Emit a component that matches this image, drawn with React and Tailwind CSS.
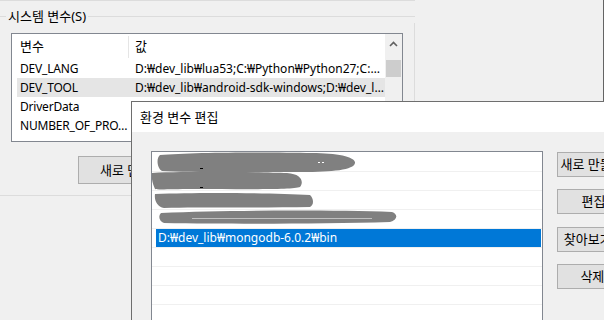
import React from 'react';

const sysVars = [
  { name: 'DEV_LANG', value: 'D:₩dev_lib₩lua53;C:₩Python₩Python27;C:…' },
  { name: 'DEV_TOOL', value: 'D:₩dev_lib₩android-sdk-windows;D:₩dev_l…', hot: true },
  { name: 'DriverData', value: '' },
  { name: 'NUMBER_OF_PRO…', value: '' },
];

const pathRows = ['', '', '', '', 'D:₩dev_lib₩mongodb-6.0.2₩bin', '', '', '', ''];

function WinButton({ children, className = '' }) {
  return (
    <div className={`h-[25px] w-[88px] shrink-0 border border-[#adadad] bg-[#e1e1e1] flex items-center justify-center whitespace-nowrap text-[13px] ${className}`}>
      {children}
    </div>
  );
}

function Redactions() {
  // scribbles hiding the private paths (coords relative to list box)
  return (
    <svg className="absolute left-0 top-0 pointer-events-none" width="400" height="100" viewBox="0 0 400 100">
      <g fill="#808080">
        <path d="M8 3 C40 0 120 0 160 1 C185 1 204 5 203 11 C202 18 180 20 150 20 C110 20 40 21 10 19 C5 16 4 6 8 3 Z" />
        <path d="M0 21 C40 19 110 20 135 21 C150 22 152 30 148 35 C140 38 90 37 40 37 C20 37 6 38 3 37 C1 33 -1 26 0 21 Z" />
        <path d="M3 42 C50 40 120 41 158 43 C162 47 162 53 158 55 C110 56 50 55 12 56 C5 55 2 48 3 42 Z" />
        <path d="M9 61 C80 58 180 58 240 60 C246 62 246 68 238 70 C170 72 80 72 12 71 C7 69 6 64 9 61 Z" />
      </g>
      <g fill="#ffffff">
        <rect x="166" y="10" width="2" height="1" />
        <rect x="170" y="10" width="2" height="1" />
        <rect x="40" y="66" width="180" height="1" opacity="0.5" />
      </g>
      <g fill="#000000">
        <rect x="48" y="16" width="3" height="1" />
        <rect x="48" y="35" width="3" height="1" />
      </g>
    </svg>
  );
}

export default function App() {
  return (
    <div className="relative w-[604px] h-[320px] overflow-hidden bg-[#f0f0f0] text-[12px] leading-none text-black font-['Noto_Sans','Noto_Sans_CJK_KR',sans-serif]">
      {/* background window: 환경 변수 */}
      <div className="w-[604px] h-[320px] border-r border-[#646464]">
        <div className="h-px w-[415px] bg-[#dcdcdc]" />

        {/* group box */}
        <div className="w-[415px] mt-[8px]">
          <div className="flex items-center h-[14px]">
            <div className="w-[6px] h-px bg-[#dcdcdc]" />
            <span className="px-[2px] whitespace-nowrap text-[13px]">시스템 변수(S)</span>
            <div className="flex-1 h-px bg-[#dcdcdc]" />
          </div>
          <div className="h-[173px] border-r border-b border-[#dcdcdc] pt-[10px]">
            <div className="ml-[11px] w-[392px] h-[109px] border border-[#828790] bg-white flex">
              <div className="flex-1 min-w-0">
                <div className="flex h-[25px] items-center">
                  <div className="w-[116px] pl-[8px] text-[13px]">변수</div>
                  <div className="w-px h-[22px] bg-[#e5e5e5]" />
                  <div className="pl-[6px] text-[13px]">값</div>
                </div>
                {sysVars.map((v) => (
                  <div key={v.name} className={`flex h-[19px] leading-[19px] ml-[5px] ${v.hot ? 'bg-[#e5e5e5]' : ''}`}>
                    <div className="w-[118px] pl-[3px] whitespace-nowrap overflow-hidden tracking-[-0.2px]">{v.name}</div>
                    <div className="flex-1 min-w-0 whitespace-nowrap overflow-hidden">{v.value}</div>
                  </div>
                ))}
              </div>
              <div className="w-[17px] bg-[#f0f0f0] flex flex-col items-center">
                <svg width="17" height="17" viewBox="0 0 17 17" className="mt-[1px]">
                  <path d="M5 11 L8.5 7.5 L12 11" fill="none" stroke="#606060" strokeWidth="1.6" />
                </svg>
                <div className="w-[15px] h-[17px] bg-[#cdcdcd] mt-[8px]" />
              </div>
            </div>
            <div className="mt-[14px] ml-[78px] h-[28px] w-[100px] border border-[#adadad] bg-[#e1e1e1] flex items-center pl-[21px] whitespace-nowrap text-[13px]">
              새로 만들기(W)...
            </div>
          </div>
        </div>
      </div>

      {/* dialog: 환경 변수 편집 */}
      <div className="absolute left-[131px] top-[101px] w-[520px] h-[240px] border border-[#6e6e6e] bg-[#f0f0f0]">
        <div className="h-[30px] bg-white flex items-center pl-[8px] text-[13px]">환경 변수 편집</div>
        <div className="flex">
          <div className="relative ml-[19px] mt-[19px] w-[392px] h-[200px] border border-[#828790] bg-white pt-px">
            {pathRows.map((p, i) => (
              <div key={i} className="h-[19px] border-b border-[#f0f0f0] flex">
                {p ? (
                  <div className="ml-[4px] mr-[1px] flex-1 bg-[#0078d7] text-white leading-[18px] pl-[2px] whitespace-nowrap">
                    {p}
                  </div>
                ) : null}
              </div>
            ))}
            <Redactions />
          </div>
          <div className="ml-[14px] mt-[20px] flex flex-col">
            <WinButton>새로 만들기(N)</WinButton>
            <WinButton className="mt-[12px]">편집(E)</WinButton>
            <WinButton className="mt-[13px]">찾아보기(B)...</WinButton>
            <WinButton className="mt-[12px]">삭제(D)</WinButton>
          </div>
        </div>
      </div>
    </div>
  );
}
